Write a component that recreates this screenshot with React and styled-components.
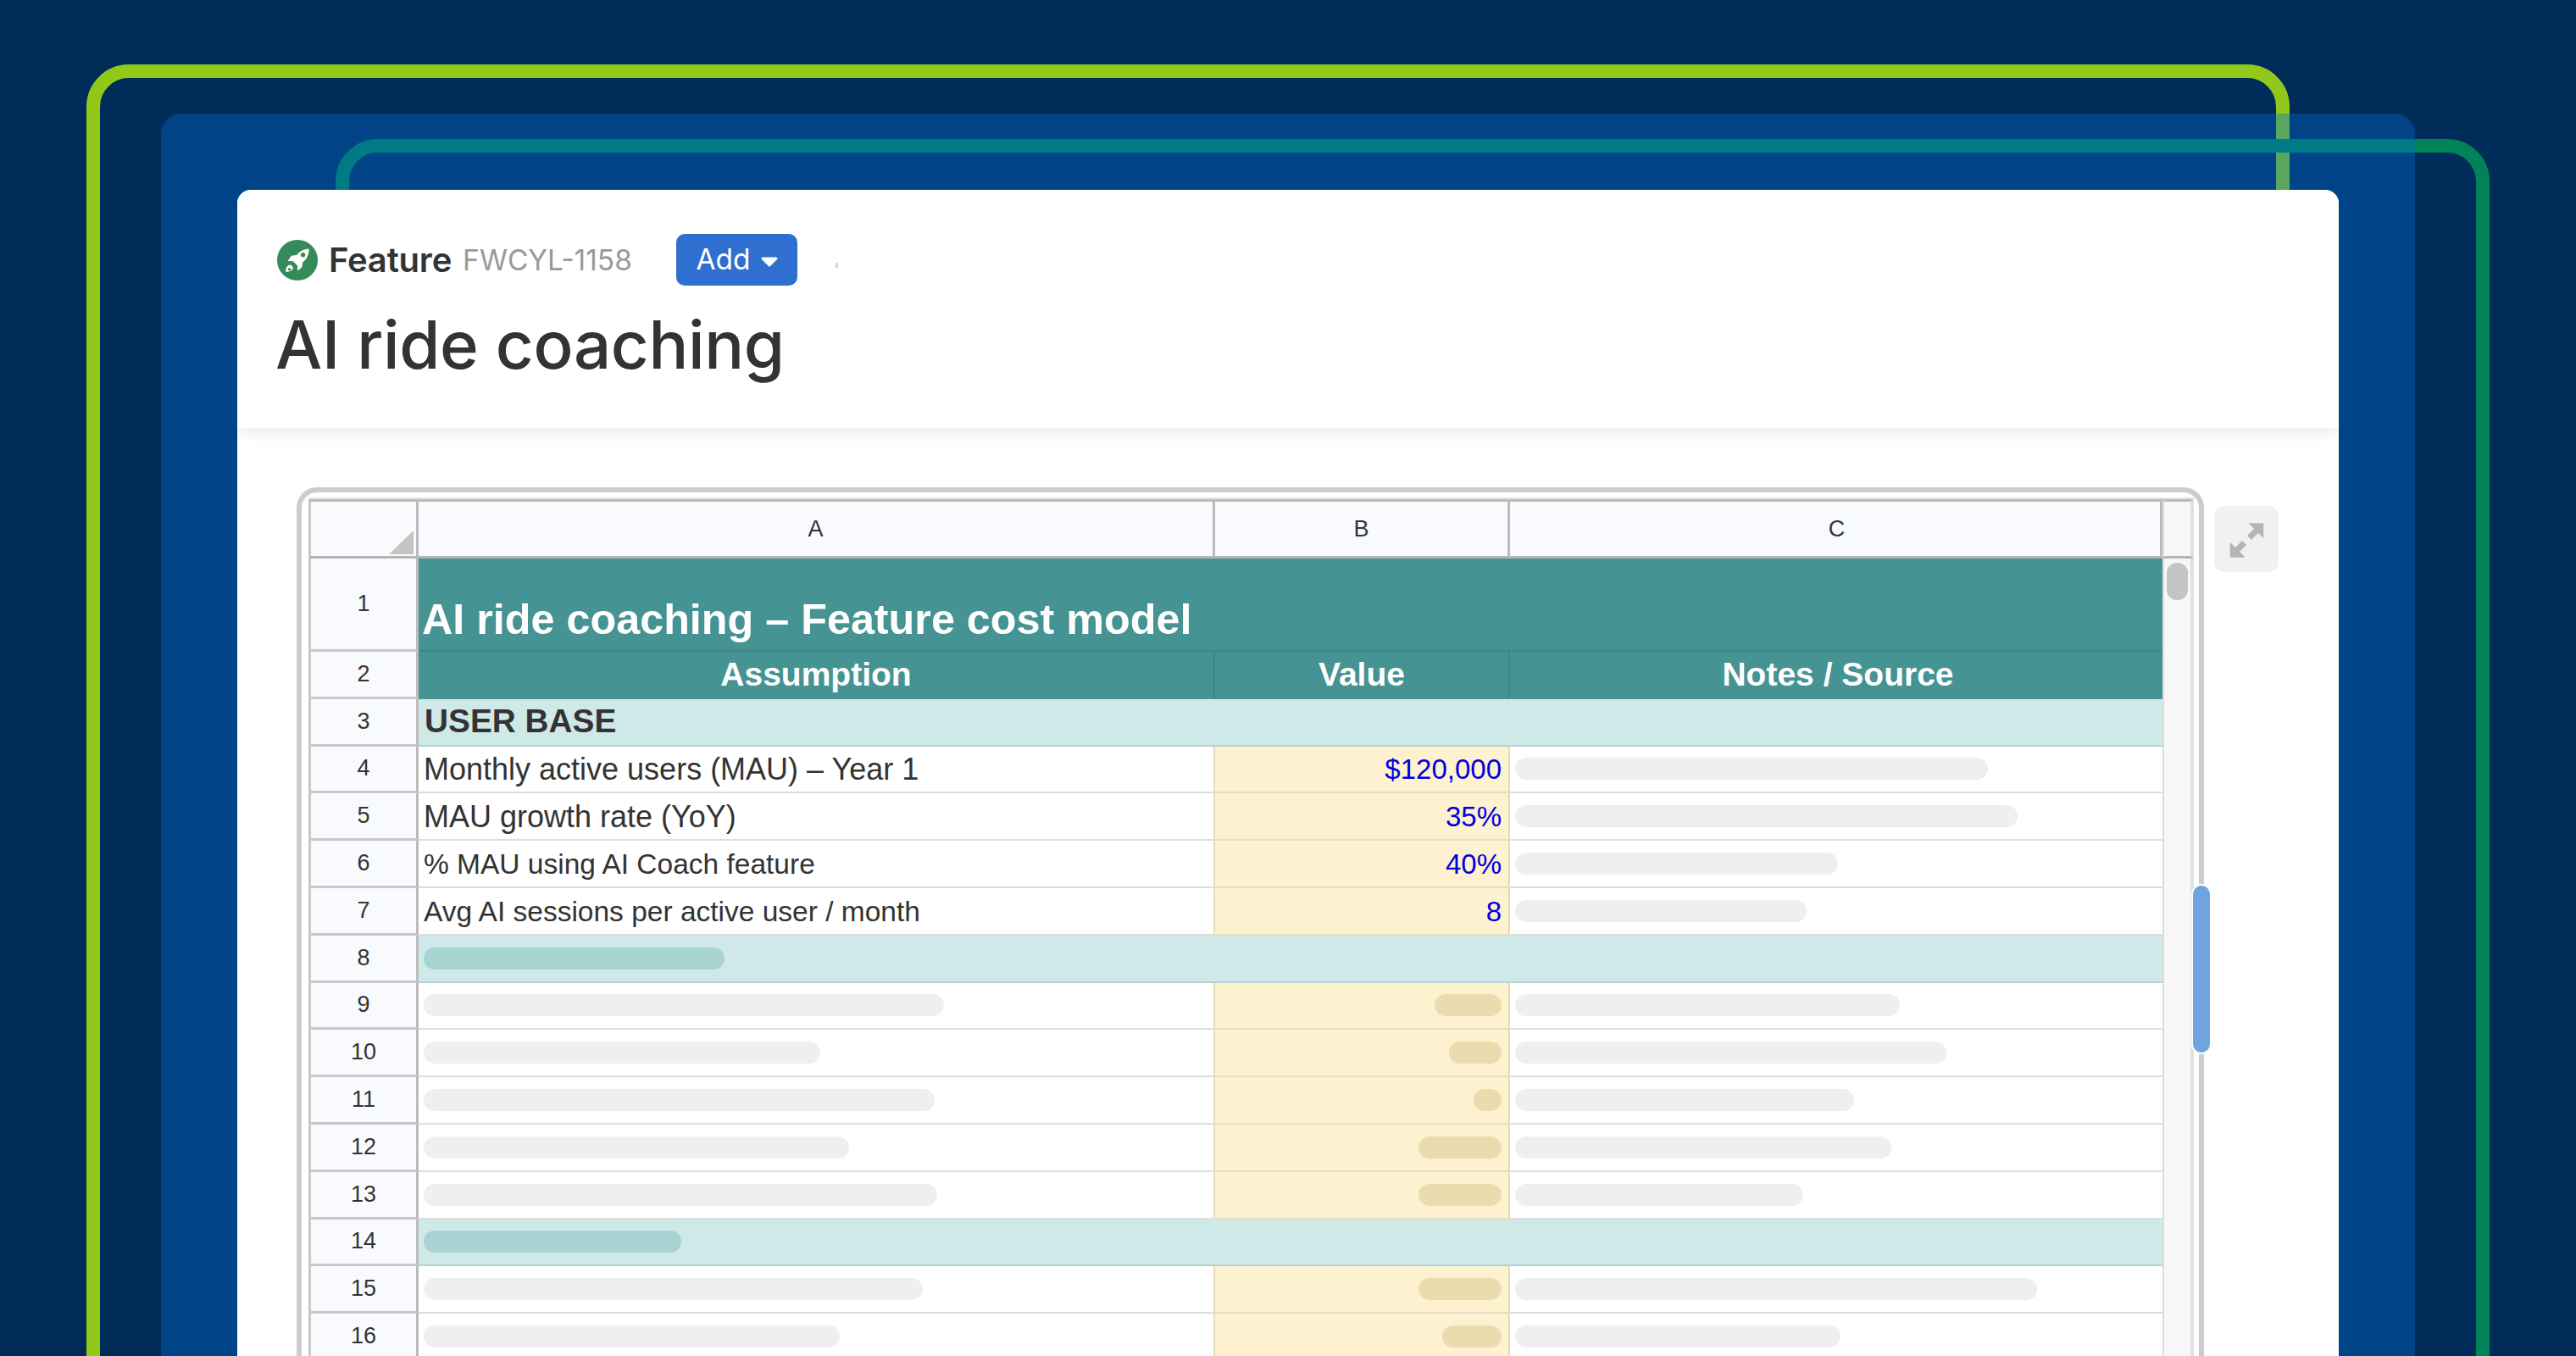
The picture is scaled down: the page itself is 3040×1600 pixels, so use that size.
import React from "react";
import styled, { createGlobalStyle } from "styled-components";

const Global = createGlobalStyle`
  html, body { margin: 0; padding: 0; background: #002c5a; }
  * { box-sizing: border-box; }
`;

const Stage = styled.div`
  position: relative;
  width: 3040px;
  height: 1600px;
  overflow: hidden;
  background: #002c5a;
  padding: 224px 0 0 280px;
`;

const Outline = styled.div`
  position: absolute;
  left: ${(p) => p.$left}px;
  top: ${(p) => p.$top}px;
  width: ${(p) => p.$width}px;
  height: 1700px;
  border: 16px solid ${(p) => p.$color};
  border-radius: 50px;
`;

const Panel = styled.div`
  position: absolute;
  left: 190px;
  top: 134px;
  width: 2660px;
  height: 1600px;
  border-radius: 24px 24px 0 0;
  background: rgba(0, 110, 209, 0.377);
`;

const Card = styled.div`
  position: relative;
  width: 2480px;
  height: 1376px;
  background: #fff;
  border-radius: 16px 16px 0 0;
  overflow: hidden;
`;

const Header = styled.header`
  position: relative;
  height: 281px;
  padding: 52px 0 0 45px;
  background: #fff;
  box-shadow: 0 3px 18px rgba(0, 0, 0, 0.1);
`;

const HeadRow = styled.div`
  display: flex;
  align-items: center;
  height: 61px;
`;

const TypeIcon = styled.svg`
  width: 48px;
  height: 48px;
  margin: 0 14px 0 2px;
  flex: none;
`;

const TypeName = styled.span`
  font: 600 40px/1 Inter, "Liberation Sans", sans-serif;
  color: #333;
  letter-spacing: -0.2px;
  margin-left: -1px;
`;

const IssueKey = styled.span`
  font: 400 33.5px/1 Inter, "Liberation Sans", sans-serif;
  color: #999;
  margin: 2px 0 0 13px;
`;

const AddButton = styled.button`
  display: flex;
  align-items: center;
  justify-content: center;
  gap: 12px;
  width: 143px;
  height: 61px;
  margin-left: 52px;
  padding: 0;
  border: 0;
  border-radius: 10px;
  background: #2f6fcf;
  color: #fff;
  font: 400 33.5px/1 Inter, "Liberation Sans", sans-serif;
`;

const Caret = styled.svg`
  width: 20px;
  height: 12px;
  margin-top: 4px;
`;

const Speck = styled.i`
  width: 3px;
  height: 6px;
  margin: 12px 0 0 45px;
  background: #d5d5d8;
`;

const Title = styled.h1`
  margin: 22px 0 0;
  font: 500 78px/96px Inter, "Liberation Sans", sans-serif;
  letter-spacing: -0.4px;
  color: #333;
`;

const Body = styled.div`
  display: flex;
  align-items: flex-start;
  padding: 70px 0 0 70px;
`;

const Frame = styled.div`
  position: relative;
  flex: none;
  width: 2251px;
  height: 1100px;
  padding: 6px 6px 0 8px;
  border: 6px solid #cccccc;
  border-bottom: 0;
  border-radius: 24px 24px 0 0;
  background: #fff;
`;

const Sheet = styled.div`
  display: flex;
  flex-direction: column;
  border-top: 2px solid #e4e4e4;
  font-family: "Liberation Sans", Arial, sans-serif;
`;

const Row = styled.div`
  display: grid;
  grid-template-columns: 130px 940px 348px 770px 37px;
  height: ${(p) => p.$h || 55.8}px;
`;

const HeadCell = styled.div`
  position: relative;
  display: flex;
  align-items: center;
  justify-content: center;
  padding-left: ${(p) => p.$shift || 0}px;
  background: #f9fafd;
  color: #333;
  font-size: 27px;
  border-left: ${(p) => (p.$corner || p.$num ? "3px solid #c8c8c8" : "0")};
  border-right: 3px solid #bbbbbb;
  border-top: ${(p) => (p.$col ? "3px solid #bbbbbb" : "0")};
  border-bottom: 3px solid ${(p) => (p.$col ? "#b5b5b5" : "#c8c8c8")};
`;

const CornerMark = styled.svg`
  position: absolute;
  right: 3px;
  bottom: 2px;
  width: 29px;
  height: 28px;
`;

const Cell = styled.div`
  display: flex;
  align-items: center;
  min-width: 0;
  padding: 0 6px;
  white-space: nowrap;
  color: #333;
  background: #fff;
  font-size: ${(p) => p.$size || 34}px;
  border-bottom: 2px solid #dddddd;
`;

const Label = styled.span`
  padding-top: 2px;
`;

const InputCell = styled(Cell)`
  justify-content: flex-end;
  margin-left: -2px;
  padding: 0 8px 0 0;
  background: #fdf1d0;
  color: #0000e0;
  font-size: 33px;
  border-left: 2px solid #eadcb4;
  border-right: 2px solid #e9d9ab;
  border-bottom-color: #e8dfc2;
`;

const TitleCell = styled.div`
  grid-column: 2 / 5;
  display: flex;
  align-items: flex-end;
  padding: 0 0 6px 4px;
  background: #469393;
  color: #fff;
  font-size: 50.3px;
  font-weight: 700;
  line-height: 1.2;
  border-bottom: 2px solid #3f8686;
`;

const ColumnTitle = styled.div`
  display: flex;
  align-items: center;
  justify-content: center;
  padding-bottom: 2px;
  padding-left: ${(p) => p.$shift || 0}px;
  background: #469393;
  color: #fff;
  font-size: 39px;
  font-weight: 700;
  border-right: ${(p) => (p.$last ? "0" : "2px solid #3f8686")};
`;

const SectionCell = styled.div`
  grid-column: 2 / 5;
  display: flex;
  align-items: center;
  padding: 0 6px;
  background: #cfe9e9;
  color: #333;
  font-size: 38.8px;
  font-weight: 700;
  border-bottom: 2px solid #b7d0d1;
`;

const SectionName = styled.span`
  padding: 0 0 2px 1px;
`;

const Gutter = styled.div`
  background: #f7f7f7;
  border-left: 2px solid #dddddd;
  border-right: 4px solid #e0e0e0;
  border-bottom: ${(p) => (p.$top ? "3px solid #b5b5b5" : "0")};
  border-top: ${(p) => (p.$top ? "3px solid #bbbbbb" : "0")};
`;

const Bar = styled.span`
  display: block;
  flex: none;
  width: ${(p) => p.$w}px;
  height: 26px;
  border-radius: 13px;
  background: ${(p) => p.$color || "#efefef"};
`;

const GrayThumb = styled.div`
  position: absolute;
  left: 2201px;
  top: 83px;
  width: 25px;
  height: 44px;
  border-radius: 12px;
  background: #c4c4c4;
`;

const BlueThumb = styled.div`
  position: absolute;
  left: 2232px;
  top: 464px;
  width: 20px;
  height: 197px;
  border-radius: 10px;
  background: #6fa4de;
  box-shadow: 0 0 0 2px #fff;
`;

const Expand = styled.button`
  flex: none;
  display: flex;
  align-items: center;
  justify-content: center;
  width: 76px;
  height: 78px;
  margin: 22px 0 0 12px;
  padding: 0;
  border: 0;
  border-radius: 12px;
  background: #f1f1f1;
`;

const ExpandIcon = styled.svg`
  width: 76px;
  height: 78px;
`;

const yellow = "#e9ddb0";
const teal = "#a8d3d3";

const rows = [
  { n: 4, a: "Monthly active users (MAU) – Year 1", b: "$120,000", c: 558, size: 36 },
  { n: 5, a: "MAU growth rate (YoY)", b: "35%", c: 593, size: 36 },
  { n: 6, a: "% MAU using AI Coach feature", b: "40%", c: 381, size: 33.5 },
  { n: 7, a: "Avg AI sessions per active user / month", b: "8", c: 344, size: 33.5 },
  { n: 8, section: 355 },
  { n: 9, aw: 614, bw: 79, c: 454 },
  { n: 10, aw: 468, bw: 62, c: 509 },
  { n: 11, aw: 603, bw: 33, c: 400 },
  { n: 12, aw: 502, bw: 98, c: 444 },
  { n: 13, aw: 606, bw: 98, c: 340 },
  { n: 14, section: 304 },
  { n: 15, aw: 589, bw: 98, c: 616 },
  { n: 16, aw: 491, bw: 70, c: 384 },
];

export default function App() {
  return (
    <Stage>
      <Global />
      <Outline $left={102} $top={76} $width={2600} $color="#92c81a" />
      <Outline $left={396} $top={164} $width={2542} $color="#008357" />
      <Panel />
      <Card>
        <Header>
          <HeadRow>
            <TypeIcon viewBox="0 0 48 48">
              <circle cx="24" cy="24" r="24" fill="#358a5a" />
              <path
                fill="#fff"
                fillRule="evenodd"
                d="M37.5 10.5C31.5 10.8 26.5 13.5 23 18l-6.2.8L12.5 25l6.3.2 5.2 5.3.2 6 5.2-4.3.8-5.7c5-3.6 7.6-9.5 7.3-16zM30.6 15a2.7 2.7 0 1 1 0 5.4 2.7 2.7 0 0 1 0-5.4z"
              />
              <path
                fill="#fff"
                fillRule="evenodd"
                d="M16 29.5c-3.6 0-5.8 3-5.8 8.3 5.2 0 8.6-2 8.6-5.6L16 29.5zM14.6 33a1.7 1.7 0 1 1 0 3.4 1.7 1.7 0 0 1 0-3.4z"
              />
            </TypeIcon>
            <TypeName>Feature</TypeName>
            <IssueKey>FWCYL-1158</IssueKey>
            <AddButton>
              Add
              <Caret viewBox="0 0 20 12">
                <path d="M2 2h16l-8 8z" fill="#fff" stroke="#fff" strokeWidth="3" strokeLinejoin="round" />
              </Caret>
            </AddButton>
            <Speck />
          </HeadRow>
          <Title>AI ride coaching</Title>
        </Header>
        <Body>
          <Frame>
            <Sheet>
              <Row $h={70}>
                <HeadCell $corner $col>
                  <CornerMark viewBox="0 0 29 28">
                    <path d="M29 0v28H0z" fill="#c4c4c4" />
                  </CornerMark>
                </HeadCell>
                <HeadCell $col>A</HeadCell>
                <HeadCell $col>B</HeadCell>
                <HeadCell $col $shift={4}>C</HeadCell>
                <Gutter $top />
              </Row>
              <Row $h={110}>
                <HeadCell $num>1</HeadCell>
                <TitleCell>AI ride coaching – Feature cost model</TitleCell>
                <Gutter />
              </Row>
              <Row>
                <HeadCell $num>2</HeadCell>
                <ColumnTitle>Assumption</ColumnTitle>
                <ColumnTitle>Value</ColumnTitle>
                <ColumnTitle $last $shift={4}>Notes / Source</ColumnTitle>
                <Gutter />
              </Row>
              <Row>
                <HeadCell $num>3</HeadCell>
                <SectionCell>
                  <SectionName>USER BASE</SectionName>
                </SectionCell>
                <Gutter />
              </Row>
              {rows.map((r) => (
                <Row key={r.n}>
                  <HeadCell $num>{r.n}</HeadCell>
                  {r.section ? (
                    <SectionCell>
                      <Bar $w={r.section} $color={teal} />
                    </SectionCell>
                  ) : (
                    <>
                      <Cell $size={r.size}>{r.a ? <Label>{r.a}</Label> : <Bar $w={r.aw} />}</Cell>
                      <InputCell>{r.b ? <Label>{r.b}</Label> : <Bar $w={r.bw} $color={yellow} />}</InputCell>
                      <Cell>
                        <Bar $w={r.c} />
                      </Cell>
                    </>
                  )}
                  <Gutter />
                </Row>
              ))}
            </Sheet>
            <GrayThumb />
            <BlueThumb />
          </Frame>
          <Expand>
            <ExpandIcon viewBox="0 0 76 78">
              <path d="M42 21h15.5v15.5z" fill="#b5b5b5" stroke="#b5b5b5" strokeWidth="1.5" strokeLinejoin="round" />
              <path d="M51 28L41.5 37.5" stroke="#b5b5b5" strokeWidth="7" />
              <path d="M19.5 60V44.5L35 60z" fill="#b5b5b5" stroke="#b5b5b5" strokeWidth="1.5" strokeLinejoin="round" />
              <path d="M26 53L35.5 43.5" stroke="#b5b5b5" strokeWidth="7" />
            </ExpandIcon>
          </Expand>
        </Body>
      </Card>
    </Stage>
  );
}
